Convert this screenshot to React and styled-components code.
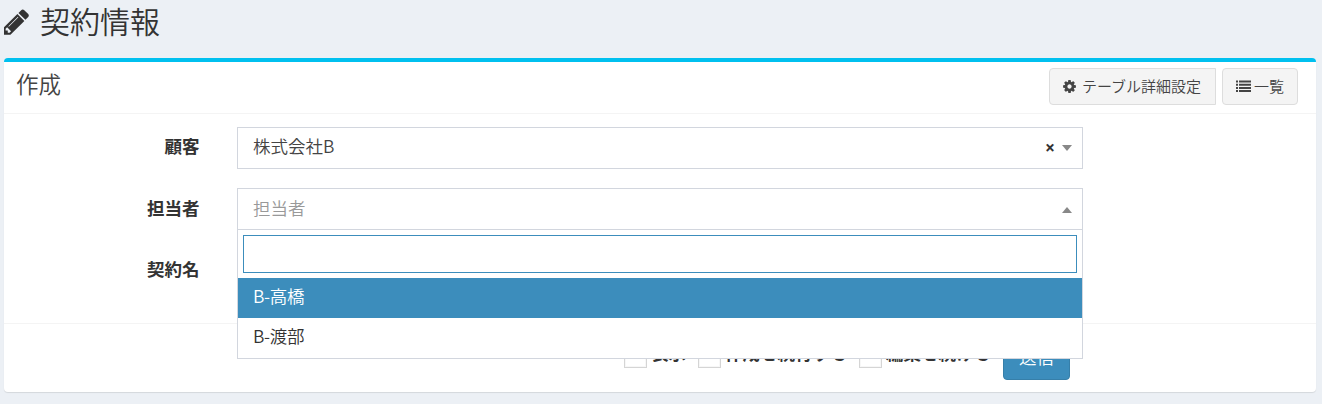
import React from "react";
import styled, { createGlobalStyle } from "styled-components";

const GlobalStyle = createGlobalStyle`
  *, *::before, *::after { box-sizing: border-box; }
  body {
    margin: 0;
    height: 404px;
    background: #ecf0f5;
    color: #333;
    font-family: "Noto Sans CJK JP", sans-serif;
    font-size: 17.5px;
    line-height: 25px;
  }
`;

const Page = styled.main`
  padding: 0 6px 0 4px;
`;

const PageHeader = styled.header`
  display: flex;
  align-items: flex-start;
  height: 58px;
`;

const PageTitle = styled.h1`
  display: flex;
  align-items: flex-start;
  gap: 6px;
  margin: 0;
  font-size: 30px;
  font-weight: 350;
  line-height: 40px;
  white-space: nowrap;
`;

const Icon = styled.svg`
  display: block;
  flex: none;
  width: ${(p) => p.$size}px;
  height: ${(p) => p.$size}px;
  fill: currentColor;
`;

const PencilIcon = styled(Icon)`
  margin-top: 7px;
`;

const Box = styled.section`
  width: 1312px;
  height: 334px;
  background: #fff;
  border-top: 4px solid #00c0ef;
  border-radius: 4px;
  box-shadow: 0 1px 1px rgba(0, 0, 0, 0.1);
`;

const BoxHeader = styled.div`
  display: flex;
  align-items: flex-start;
  justify-content: space-between;
  height: 52px;
  padding: 6px 18px 0 12px;
  border-bottom: 1px solid #f4f4f4;
`;

const BoxTitle = styled.h3`
  margin: 3px 0 0;
  color: #444;
  font-size: 22.5px;
  font-weight: 350;
  line-height: 24px;
`;

const Tools = styled.div`
  display: flex;
  gap: 6px;
`;

const ToolButton = styled.button`
  display: flex;
  align-items: center;
  gap: ${(p) => p.$gap}px;
  width: ${(p) => p.$width}px;
  height: 37px;
  padding: 0 0 2px ${(p) => p.$inset || 12}px;
  border: 1px solid #ddd;
  border-radius: ${(p) => (p.$squareEnd ? "4px 0 0 4px" : "4px")};
  background: #f4f4f4;
  color: #444;
  font: 350 15px/22px "Noto Sans CJK JP", sans-serif;
  white-space: nowrap;

  ${Icon} {
    margin-top: 2px;
  }
`;

const FormBody = styled.div`
  height: 209px;
  padding-top: 13px;
`;

const FormRow = styled.div`
  display: flex;
  height: 61px;
`;

const Label = styled.label`
  width: 196px;
  margin-right: 37px;
  padding: ${(p) => (p.$first ? 6 : 7)}px 0.5px 0 0;
  font-weight: 700;
  text-align: right;
`;

const SelectWrap = styled.div`
  position: relative;
  width: 846px;
`;

const Select = styled.div`
  display: flex;
  align-items: flex-start;
  height: 42px;
  padding: ${(p) => (p.$placeholder ? 6 : 5)}px 10px 0 15px;
  border: 1px solid #d2d6de;
  background: #fff;
  color: ${(p) => (p.$placeholder ? "#999" : "#444")};
  font-weight: 350;
`;

const Value = styled.span`
  flex: 1;
`;

const Clear = styled.span`
  margin: 4px 7px 0 0;
  color: #333;
  font: 700 17.5px/20px "Open Sans", sans-serif;
`;

const Caret = styled.i`
  width: 10px;
  height: 6px;
  margin-top: 12px;
  background: #888;
  clip-path: ${(p) => (p.$up ? "polygon(50% 0, 100% 100%, 0 100%)" : "polygon(0 0, 100% 0, 50% 100%)")};
`;

const Dropdown = styled.div`
  position: absolute;
  top: 41px;
  left: 0;
  z-index: 2;
  width: 846px;
  height: 130px;
  border: 1px solid #d2d6de;
  background: #fff;
`;

const SearchBox = styled.div`
  padding: 5px;
  height: 48px;
`;

const SearchInput = styled.input`
  display: block;
  width: 100%;
  height: 38px;
  border: 1px solid #3c8dbc;
  outline: none;
  background: #fff;
`;

const Option = styled.div`
  height: 40px;
  padding: 5px 15px;
  background: ${(p) => (p.$active ? "#3c8dbc" : "#fff")};
  color: ${(p) => (p.$active ? "#fff" : "#333")};
  font-weight: 350;
  letter-spacing: -0.3px;
`;

const BoxFooter = styled.footer`
  display: flex;
  height: 69px;
  padding: 12px 246px 0 620px;
  border-top: 1px solid #f4f4f4;
`;

const CheckLabel = styled.label`
  display: flex;
  flex: none;
  gap: 4px;
  width: ${(p) => p.$width}px;
  padding-top: 6px;
  font-weight: 700;
  line-height: 22px;
  white-space: nowrap;
`;

const Check = styled.span`
  width: 23px;
  height: 23px;
  margin-top: 3px;
  border: 1px solid #d5d5d5;
  background: #fff;
  box-shadow: inset 0 0 0 1px #f7f7f7;
`;

const Submit = styled.button`
  width: 67px;
  height: 44px;
  padding: 0 0 4px;
  border: 1px solid #367fa9;
  border-radius: 4px;
  background: #3c8dbc;
  color: #fff;
  font: 350 17.5px/25px "Noto Sans CJK JP", sans-serif;
`;

const PENCIL =
  "M491 1536l91-91-235-235-91 91v107h128v128h107zm523-928q0-22-22-22-10 0-17 7l-542 542q-7 7-7 17 0 22 22 22 10 0 17-7l542-542q7-7 7-17zm-54-192l416 416-832 832h-416v-416zm683 96q0 53-37 90l-166 166-416-416 166-165q36-38 90-38 53 0 91 38l235 234q37 39 37 91z";
const COG =
  "M1152 896q0-106-75-181t-181-75-181 75-75 181 75 181 181 75 181-75 75-181zm512-109v222q0 12-8 23t-20 13l-185 28q-19 54-39 91 35 50 107 138 10 12 10 25t-9 23q-27 37-99 108t-94 71q-12 0-26-9l-138-108q-44 23-91 38-16 136-29 186-7 28-36 28h-222q-14 0-24.5-8.5t-11.5-21.5l-28-184q-49-16-90-37l-141 107q-10 9-25 9-14 0-25-11-126-114-165-168-7-10-7-23 0-12 8-23 15-21 51-66.5t54-70.5q-27-50-41-99l-183-27q-13-2-21-12.5t-8-23.5v-222q0-12 8-23t19-13l186-28q14-46 39-92-40-57-107-138-10-12-10-24 0-10 9-23 26-36 98.5-107.5t94.5-71.5q13 0 26 10l138 107q44-23 91-38 16-136 29-186 7-28 36-28h222q14 0 24.5 8.5t11.5 21.5l28 184q49 16 90 37l142-107q9-9 24-9 13 0 25 10 129 119 165 170 7 8 7 22 0 12-8 23-15 21-51 66.5t-54 70.5q26 50 41 98l183 28q13 2 21 12.5t8 23.5z";
const LIST =
  "M0 1.5h2v2H0zM3 1.5h12v2H3zM0 4.7h2v2H0zM3 4.7h12v2H3zM0 7.9h2v2H0zM3 7.9h12v2H3zM0 11.1h2v2H0zM3 11.1h12v2H3z";

const checks = [
  { text: "表示", width: 74 },
  { text: "作成を続行する", width: 161 },
  { text: "編集を続ける", width: 144 },
];

export default function App() {
  return (
    <Page>
      <GlobalStyle />
      <PageHeader>
        <PageTitle>
          <PencilIcon $size={30} viewBox="160 0 1792 1792"><path d={PENCIL} /></PencilIcon>
          契約情報
        </PageTitle>
      </PageHeader>
      <Box>
        <BoxHeader>
          <BoxTitle>作成</BoxTitle>
          <Tools>
            <ToolButton $width={167} $gap={5} $squareEnd>
              <Icon $size={15} viewBox="0 0 1792 1792"><path d={COG} /></Icon>
              テーブル詳細設定
            </ToolButton>
            <ToolButton $width={76} $gap={3} $inset={13}>
              <Icon $size={15} viewBox="0 0 15 15"><path d={LIST} /></Icon>
              一覧
            </ToolButton>
          </Tools>
        </BoxHeader>
        <FormBody>
          <FormRow>
            <Label $first>顧客</Label>
            <SelectWrap>
              <Select>
                <Value>株式会社B</Value>
                <Clear>×</Clear>
                <Caret />
              </Select>
            </SelectWrap>
          </FormRow>
          <FormRow>
            <Label>担当者</Label>
            <SelectWrap>
              <Select $placeholder>
                <Value>担当者</Value>
                <Caret $up />
              </Select>
              <Dropdown>
                <SearchBox><SearchInput /></SearchBox>
                <Option $active>B-高橋</Option>
                <Option>B-渡部</Option>
              </Dropdown>
            </SelectWrap>
          </FormRow>
          <FormRow>
            <Label>契約名</Label>
          </FormRow>
        </FormBody>
        <BoxFooter>
          {checks.map((c) => (
            <CheckLabel key={c.text} $width={c.width}>
              <Check />
              {c.text}
            </CheckLabel>
          ))}
          <Submit>送信</Submit>
        </BoxFooter>
      </Box>
    </Page>
  );
}
